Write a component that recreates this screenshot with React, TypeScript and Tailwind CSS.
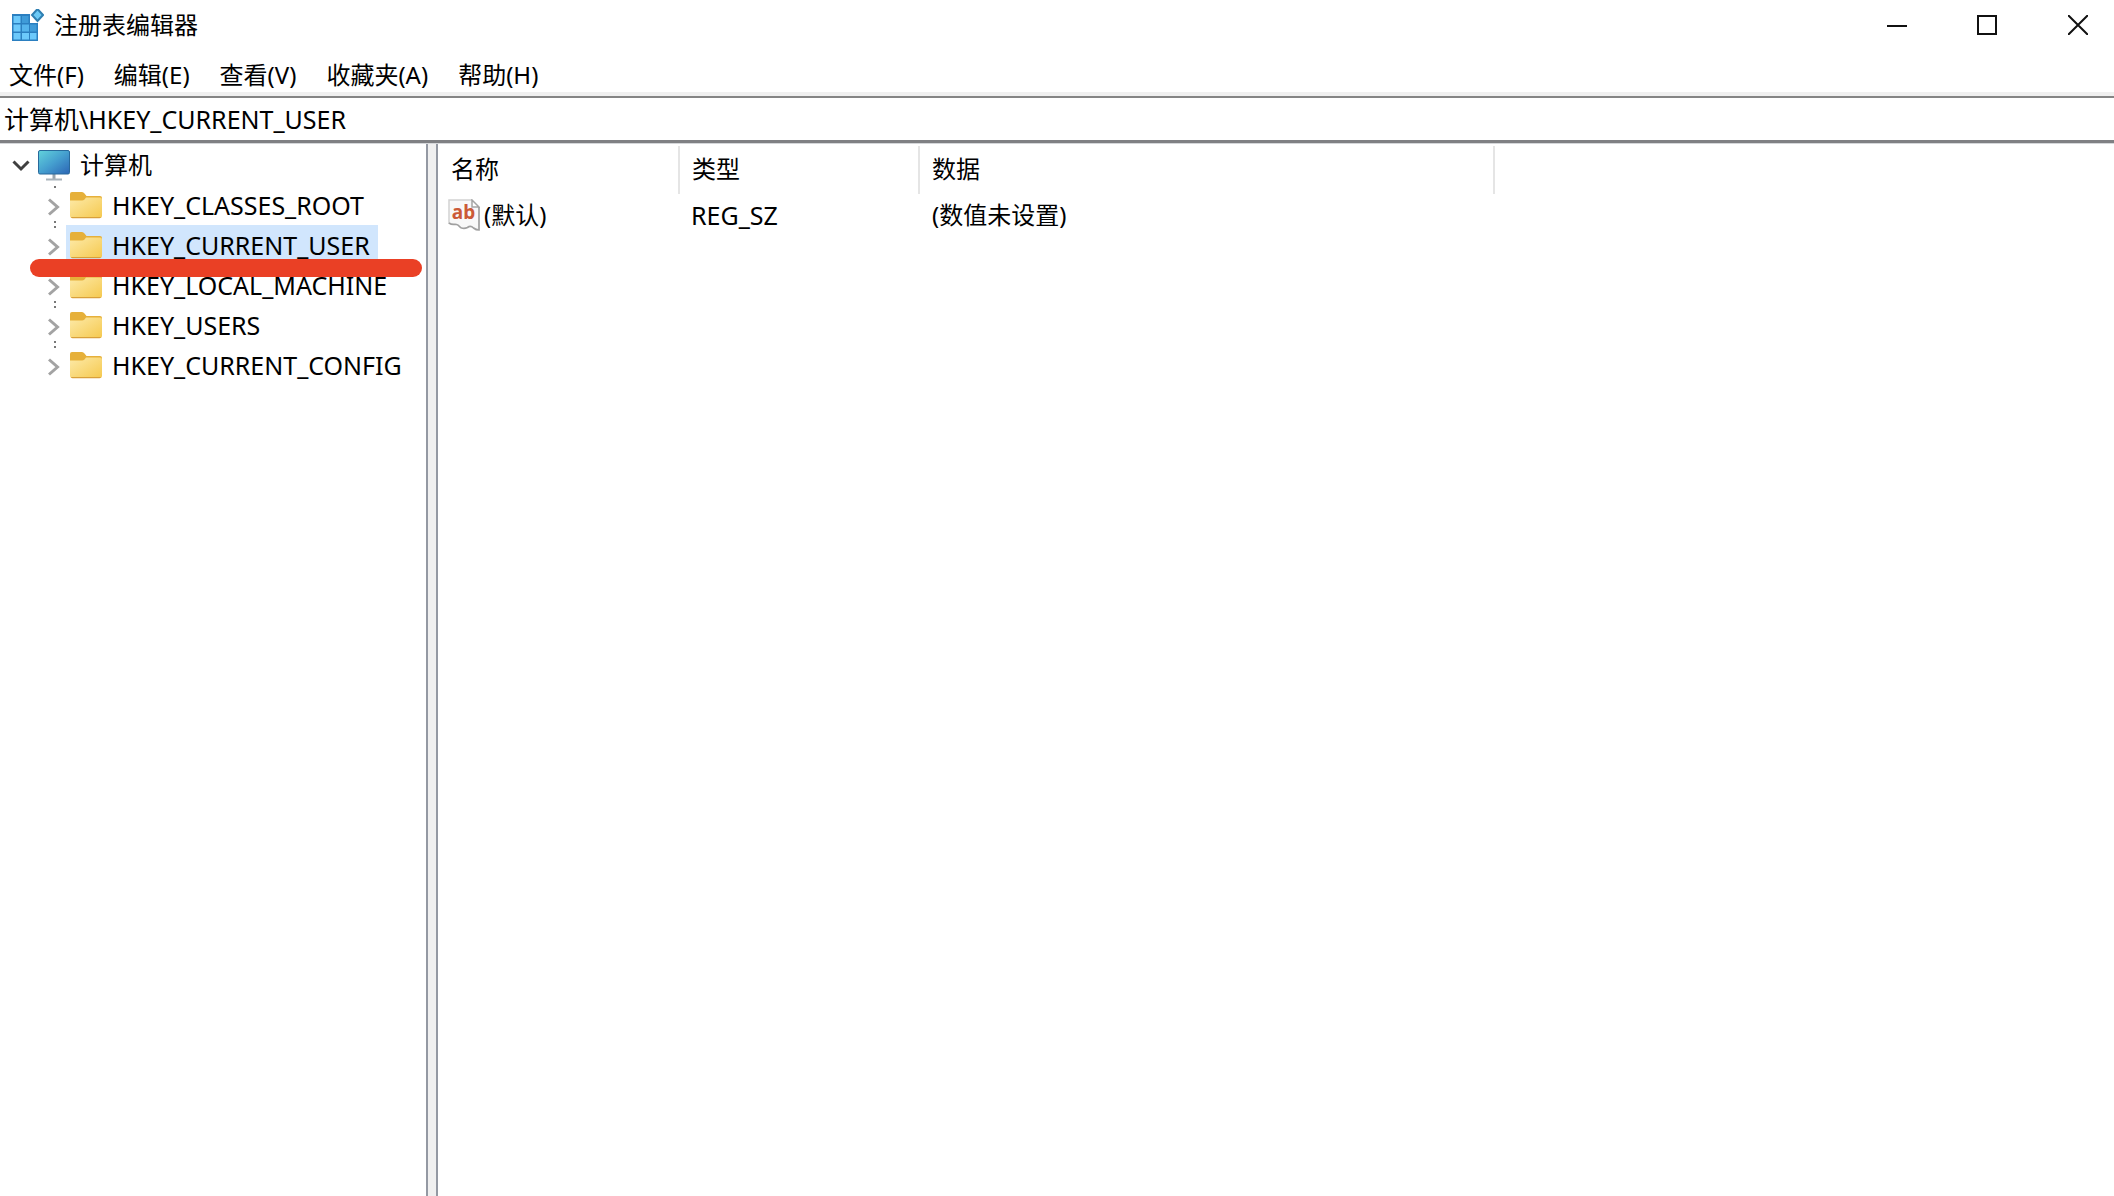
/**
 * Registry editor window: title bar, menus, address bar, key tree and value list
 */
import React, { useState } from 'react';

const menus = ['文件(F)', '编辑(E)', '查看(V)', '收藏夹(A)', '帮助(H)'];

const hives = [
  'HKEY_CLASSES_ROOT',
  'HKEY_CURRENT_USER',
  'HKEY_LOCAL_MACHINE',
  'HKEY_USERS',
  'HKEY_CURRENT_CONFIG'
];

const values = [{ name: '(默认)', type: 'REG_SZ', data: '(数值未设置)' }];

const AppIcon = () => (
  <svg className="w-8 h-8 shrink-0" viewBox="0 0 32 32" aria-hidden="true">
    <path d="M0 5h18v9h8v18H0z" fill="#2b7fc0" />
    <path d="M1.500 7h7v7h-7zM1.500 15.500h7v7h-7zM1.500 24h7v6.500h-7zM10 24h7v6.500h-7zM18 24h6.500v6.500H18z" fill="#6cc9fb" />
    <path d="M10 15.500h7v7h-7z" fill="#55b4ec" />
    <path d="M10 7h6.500v7H10zM18 15.500h6.500v7H18z" fill="#3f9bd8" />
    <path d="M25.500 0L31 6l-5.500 6L20 6z" fill="#6cc9f5" stroke="#2f7fb2" strokeWidth="2" />
  </svg>
);

const MonitorIcon = () => (
  <svg className="w-8 h-8 shrink-0" viewBox="0 0 32 32" aria-hidden="true">
    <defs>
      <linearGradient id="screen" x1="0" y1="0" x2="1" y2="1">
        <stop offset="0" stopColor="#62d3dc" />
        <stop offset="0.5" stopColor="#459fcf" />
        <stop offset="1" stopColor="#2c65b5" />
      </linearGradient>
    </defs>
    <path d="M14.500 25h3v5h-3z" fill="#9aa5ae" />
    <path d="M8 29.500h16v2H8z" fill="#a9b3bb" />
    <rect x="0.500" y="1.500" width="31" height="23.500" rx="1.500" fill="url(#screen)" stroke="#28699b" />
  </svg>
);

const FolderIcon = () => (
  <svg className="w-8 h-8 shrink-0" viewBox="0 0 32 32" aria-hidden="true">
    <defs>
      <linearGradient id="folder" x1="0" y1="0" x2="1" y2="1">
        <stop offset="0" stopColor="#fdeaa8" />
        <stop offset="1" stopColor="#f5c94f" />
      </linearGradient>
    </defs>
    <path d="M0 5q0-2 2-2h10q1.500 0 2.500 1.500L16.500 7H30q2 0 2 2v8H0z" fill="#e6b03a" />
    <path d="M0 11.500h12q1.500 0 2.500-1L16 8.500h14q2 0 2 2V27q0 2-2 2H2q-2 0-2-2z" fill="url(#folder)" />
    <path d="M1 28h30q-.5 1.200-1.500 1.200h-27Q1.300 29.200 1 28z" fill="#d9a03a" />
  </svg>
);

const StringValueIcon = () => (
  <svg className="w-8 h-8 shrink-0" viewBox="0 0 32 32" aria-hidden="true">
    <path d="M1 1h23l7 7v23q-3 1-5.500-2-3-3-6-.5-3 1.500-6 .5c-2 0-2-3-5-3.500-3-.5-4 1-7.500-1.500z" fill="#f8f8f8" />
    <path d="M1 25V1h23" fill="none" stroke="#d2d2d2" strokeWidth="1.500" />
    <path d="M24 1v7h7z" fill="#fff" stroke="#a5a5a5" strokeWidth="1.500" />
    <path d="M31 8v23q-3 0-5.500-2-3-3-6-.5-3 1.500-6 .5c-2 0-2-3-5-3.500-3-.5-4 1-7.500-1.500" fill="none" stroke="#a0a0a0" strokeWidth="1.700" />
    <text x="15.500" y="20" textAnchor="middle" fontFamily="Noto Sans, sans-serif" fontSize="19" fontWeight="700" fill="#cb5a36">ab</text>
  </svg>
);

const RootArrow = () => (
  <svg className="w-[26px] h-10 shrink-0" viewBox="0 0 26 40" aria-hidden="true">
    <path d="M5.500 16.500l7.500 7.500 7.500-7.500" fill="none" stroke="#404040" strokeWidth="3" />
  </svg>
);

// The dots join a key to its neighbours, so the last key has none below it
const KeyArrow = ({ last }: { last: boolean }) => (
  <svg className="w-[26px] h-10 shrink-0" viewBox="0 0 26 40" aria-hidden="true">
    <path d="M14 1h2v2h-2z" fill="#777" />
    {!last && <path d="M14 36h2v2h-2z" fill="#777" />}
    <path d="M9 14.500l8.500 7.500-8.500 7.500" fill="none" stroke="#a3a3a3" strokeWidth="3" />
  </svg>
);

const App: React.FC = () => {
  const [selected, setSelected] = useState('HKEY_CURRENT_USER');

  return (
    <div className="min-h-screen flex flex-col bg-white text-black text-[24px] leading-8 font-['Noto_Sans','Noto_Sans_CJK_SC',sans-serif]">
      <header className="flex items-center justify-between h-[50px] pl-3">
        <div className="flex items-center gap-[10px]">
          <AppIcon />
          <h1>注册表编辑器</h1>
        </div>
        <div className="flex">
          <button aria-label="最小化" className="w-[90px] h-12 flex items-center justify-center">
            <svg className="w-5 h-5" viewBox="0 0 20 20"><path d="M0 11h20" stroke="#111" strokeWidth="2" /></svg>
          </button>
          <button aria-label="最大化" className="w-[90px] h-12 flex items-center justify-center">
            <svg className="w-5 h-5" viewBox="0 0 20 20"><path d="M1 1h18v18H1z" fill="none" stroke="#111" strokeWidth="2" /></svg>
          </button>
          <button aria-label="关闭" className="w-[82px] h-12 flex items-center justify-center pl-[10px]">
            <svg className="w-5 h-5" viewBox="0 0 20 20"><path d="M0 0l20 20M20 0L0 20" stroke="#111" strokeWidth="2" /></svg>
          </button>
        </div>
      </header>

      <nav className="flex items-center gap-[30px] h-[46px] px-[9px] pt-2 border-b-4 border-[#f0f0f0]">
        {menus.map((menu) => (
          <button key={menu} className="whitespace-nowrap">{menu}</button>
        ))}
      </nav>

      <input
        aria-label="地址"
        className="w-full h-[47px] px-1 pb-[2px] text-[25px] border-t-2 border-b-3 border-t-[#858585] border-b-[#7f8083] outline-none"
        value={`计算机\\${selected}`}
        readOnly
      />

      <main className="flex grow border-t border-[#d5d7da]">
        <aside className="relative w-[428px] shrink-0 pt-[1px] border-r-2 border-[#9499a3]">
          <div className="flex items-center h-10 pl-2">
            <RootArrow />
            <button className="flex items-center gap-[10px] h-10 px-1">
              <MonitorIcon />
              计算机
            </button>
          </div>
          <ul className="text-[25px]">
            {hives.map((hive, index) => (
              <li key={hive} className="flex items-center h-10 pl-10">
                <KeyArrow last={index === hives.length - 1} />
                <button
                  onClick={() => setSelected(hive)}
                  className={`flex items-center gap-[10px] h-10 pl-1 pr-2 ${selected === hive ? 'bg-[#d1e6fd]' : ''}`}
                >
                  <FolderIcon />
                  {hive}
                </button>
              </li>
            ))}
          </ul>
          {/* Red marker under the key to open */}
          <div className="absolute left-[30px] right-1 top-[115px] h-[18px] rounded-full bg-[#ea4025]" />
        </aside>

        <div className="w-2 shrink-0 bg-[#f0f0f0]" />

        <section className="grow border-l-2 border-[#9499a3] pl-[1px] pt-[2px]">
          <table className="table-fixed w-[1056px] text-left">
            <thead>
              <tr className="h-12">
                <th className="w-[240px] pl-3 pb-[2px] font-normal border-r-2 border-[#e5e5e5]">名称</th>
                <th className="w-[240px] pl-3 pb-[2px] font-normal border-r-2 border-[#e5e5e5]">类型</th>
                <th className="pl-3 pb-[2px] font-normal border-r-2 border-[#e5e5e5]">数据</th>
              </tr>
            </thead>
            <tbody>
              {values.map((value) => (
                <tr key={value.name} className="h-[42px]">
                  <td className="pl-[9px]">
                    <div className="flex items-center gap-1">
                      <StringValueIcon />
                      {value.name}
                    </div>
                  </td>
                  <td className="pl-3 text-[25px]">{value.type}</td>
                  <td className="pl-[13px]">{value.data}</td>
                </tr>
              ))}
            </tbody>
          </table>
        </section>
      </main>
    </div>
  );
};

export default App;
